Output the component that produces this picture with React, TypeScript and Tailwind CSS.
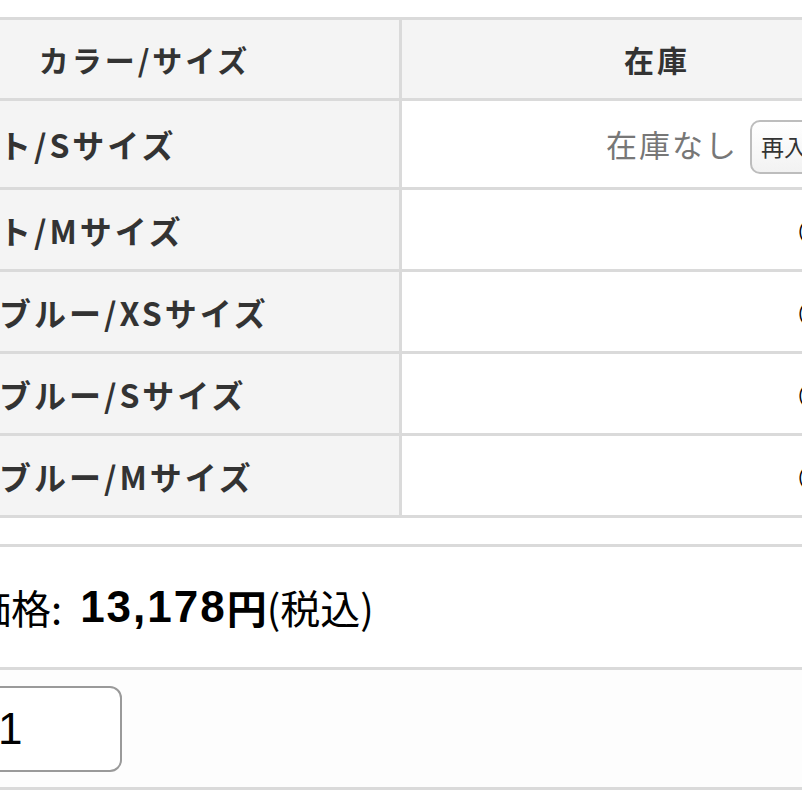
import React from 'react';

const rows = [
  { name: 'ホワイト/Sサイズ', soldOut: true },
  { name: 'ホワイト/Mサイズ', soldOut: false },
  { name: 'ライトブルー/XSサイズ', soldOut: false },
  { name: 'ライトブルー/Sサイズ', soldOut: false },
  { name: 'ライトブルー/Mサイズ', soldOut: false },
];

const App: React.FC = () => {
  return (
    <div className="min-h-[802px] w-[802px] overflow-hidden bg-white font-['Noto_Sans_CJK_JP',sans-serif] text-[#333]">
      <div className="ml-[-110px] w-[1032px] pt-[17px]">
        {/* Stock table */}
        <div className="border-t-[3px] border-[#dadada]">
          <div className="flex h-[81px] border-b-[3px] border-[#dadada] bg-[#f4f4f4]">
            <div className="flex w-[512px] items-center justify-center border-r-[3px] border-[#dadada] text-[30px] font-bold tracking-[3px]">
              カラー/サイズ
            </div>
            <div className="flex w-[510px] items-center justify-center text-[30px] font-bold tracking-[3px]">
              在庫
            </div>
          </div>

          {rows.map((row) => (
            <div
              key={row.name}
              className={`flex border-b-[3px] border-[#dadada] ${row.soldOut ? 'h-[89px]' : 'h-[82px]'}`}
            >
              <div className="flex w-[512px] items-center border-r-[3px] border-[#dadada] bg-[#f4f4f4] pl-[4px] text-[32px] font-bold tracking-[3px]">
                {row.name}
              </div>
              <div className="flex w-[510px] items-center justify-end pr-[71px]">
                {row.soldOut ? (
                  <>
                    <span className="text-[31px] tracking-[2px] text-[#777]">在庫なし</span>
                    <button className="ml-[12px] mt-[5px] h-[54px] rounded-[10px] border-2 border-[#bdbdbd] bg-gradient-to-b from-white to-[#f2f2f2] px-[9px] text-[23px] text-[#333]">
                      再入荷
                    </button>
                  </>
                ) : (
                  <span className="mr-[13px] text-[30px] font-black leading-none text-black">○</span>
                )}
              </div>
            </div>
          ))}
        </div>

        {/* Price */}
        <div className="mt-[26px] flex h-[126px] items-center border-y-[3px] border-[#dadada] pl-[81px] text-[40px] text-black">
          <span>価格:</span>
          <span className="ml-[18px] font-['Liberation_Sans',sans-serif] text-[44px] font-bold tracking-[2px]">13,178</span>
          <span className="font-bold">円</span>
          <span>(税込)</span>
        </div>

        {/* Quantity */}
        <div className="flex h-[120px] items-center border-b-[3px] border-[#dadada] bg-[#fdfdfd] pl-[96px]">
          <input
            readOnly
            value="1"
            className="h-[86px] w-[136px] rounded-[12px] border-2 border-[#9a9a9a] bg-white pl-[10px] font-['Liberation_Sans',sans-serif] text-[44px] text-black outline-none"
          />
        </div>
      </div>
    </div>
  );
};

export default App;
